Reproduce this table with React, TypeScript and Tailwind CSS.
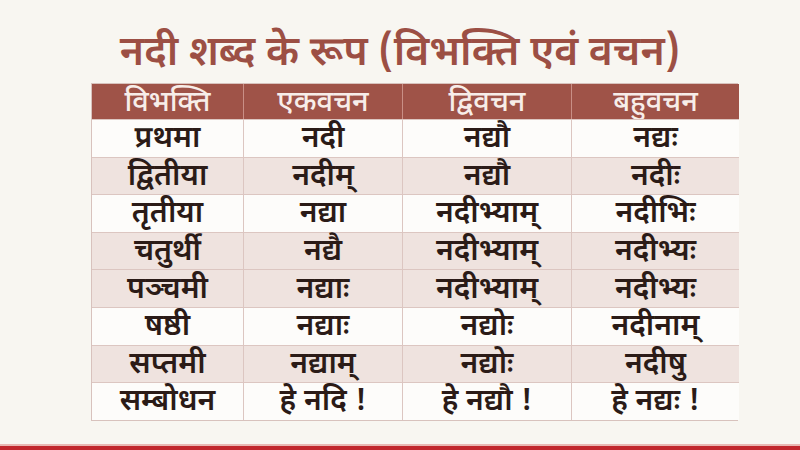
import React from "react";

const rows: string[][] = [
  ["प्रथमा", "नदी", "नद्यौ", "नद्यः"],
  ["द्वितीया", "नदीम्", "नद्यौ", "नदीः"],
  ["तृतीया", "नद्या", "नदीभ्याम्", "नदीभिः"],
  ["चतुर्थी", "नद्यै", "नदीभ्याम्", "नदीभ्यः"],
  ["पञ्चमी", "नद्याः", "नदीभ्याम्", "नदीभ्यः"],
  ["षष्ठी", "नद्याः", "नद्योः", "नदीनाम्"],
  ["सप्तमी", "नद्याम्", "नद्योः", "नदीषु"],
  ["सम्बोधन", "हे नदि !", "हे नद्यौ !", "हे नद्यः !"],
];

const shaded = [false, true, false, true, true, false, true, false];

const headers = ["विभक्ति", "एकवचन", "द्विवचन", "बहुवचन"];

export default function App() {
  return (
    <div
      className="w-[800px] h-[450px] bg-[#f8f6f1] flex flex-col overflow-hidden"
      style={{ fontFamily: '"Noto Sans Devanagari", "Noto Sans", "Lato", sans-serif' }}
    >
      <div className="h-[83px] flex items-center justify-center pt-[28px]">
        <h1 className="text-[41px] font-semibold text-[#9c4f44] leading-none">
          नदी शब्द के रूप (विभक्ति एवं वचन)
        </h1>
      </div>
      <div className="pl-[91px]">
        <div className="w-[647px] grid grid-cols-[152px_159px_169px_167px] border border-[#d8c2bd]">
          {headers.map((h, i) => (
            <div
              key={h}
              className={`h-[35px] bg-[#9f5348] text-[#f7ede9] text-[29px] font-medium flex items-center justify-center leading-none pt-[6px] ${i < 3 ? "border-r border-[#c98f86]" : ""}`}
            >
              {h}
            </div>
          ))}
          {rows.map((r, ri) =>
            r.map((c, ci) => (
              <div
                key={`${ri}-${ci}`}
                className={`h-[37.6px] flex items-center justify-center text-[30px] font-semibold text-[#2b1b17] leading-none pt-[4px] border-t border-[#dcc6c1] ${ci < 3 ? "border-r" : ""} ${shaded[ri] ? "bg-[#efe3df]" : "bg-[#fdfcfa]"}`}
              >
                {c}
              </div>
            ))
          )}
        </div>
      </div>
      <div className="flex-1" />
      <div className="h-[2px] bg-[#e9b7b3]" />
      <div className="h-[4px] bg-[#c1272d]" />
    </div>
  );
}
